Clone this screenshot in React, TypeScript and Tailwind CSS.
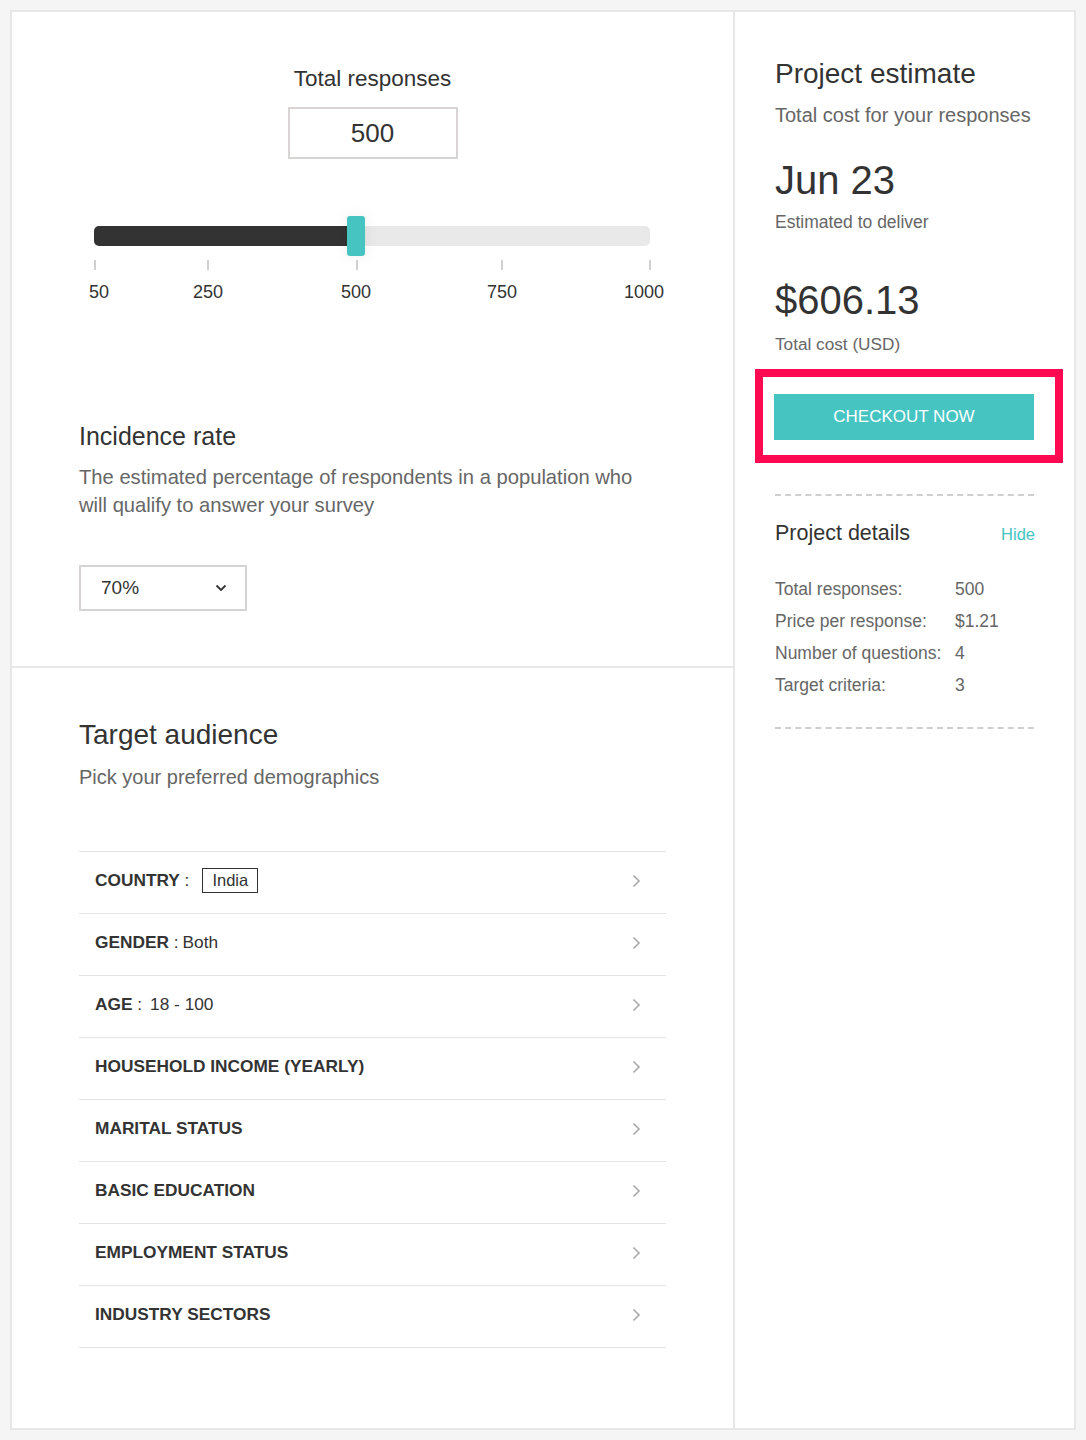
import React from 'react'

const ticks = [
  { tick: 0, label: 5, text: '50' },
  { tick: 113, label: 114, text: '250' },
  { tick: 262, label: 262, text: '500' },
  { tick: 407, label: 408, text: '750' },
  { tick: 555, label: 550, text: '1000' },
]

const criteria: { label: string; value?: React.ReactNode }[] = [
  {
    label: 'COUNTRY',
    value: (
      <span className="ml-[13px] inline-block border-[1.5px] border-[#333] px-[9px] text-[16.5px] leading-[23px] font-normal">India</span>
    ),
  },
  { label: 'GENDER', value: <span className="ml-[4px] font-normal">Both</span> },
  { label: 'AGE', value: <span className="ml-[8px] font-normal">18 - 100</span> },
  { label: 'HOUSEHOLD INCOME (YEARLY)' },
  { label: 'MARITAL STATUS' },
  { label: 'BASIC EDUCATION' },
  { label: 'EMPLOYMENT STATUS' },
  { label: 'INDUSTRY SECTORS' },
]

const details = [
  ['Total responses:', '500'],
  ['Price per response:', '$1.21'],
  ['Number of questions:', '4'],
  ['Target criteria:', '3'],
]

const Chevron = () => (
  <svg width="9" height="14" viewBox="0 0 9 14" fill="none" className="text-[#aaa]">
    <polyline points="1.5,1.5 7,7 1.5,12.5" stroke="currentColor" strokeWidth="1.6" />
  </svg>
)

const Slider = () => (
  <div className="relative ml-[82px] mt-[57px] h-[86px] w-[556px]">
    <div className="absolute left-0 top-[10px] h-[20px] w-[556px] overflow-hidden rounded-[5px] bg-[#e9e9e9]">
      <div className="h-full w-[262px] bg-[#333]" />
    </div>
    <div className="absolute left-[253px] top-0 h-[40px] w-[18px] rounded-[3px] bg-[#45c4c2] shadow-[0_0_14px_rgba(0,0,0,0.08)]" />
    {ticks.map(t => (
      <React.Fragment key={t.text}>
        <div className="absolute top-[44px] h-[10px] w-[2px] bg-[#d0d0d0]" style={{ left: t.tick }} />
        <div
          className="absolute top-[65px] -translate-x-1/2 text-[18px] leading-[22px] text-[#333]"
          style={{ left: t.label }}
        >
          {t.text}
        </div>
      </React.Fragment>
    ))}
  </div>
)

export default function App() {
  return (
    <div
      className="min-h-[1440px] bg-[#f5f5f5] pl-[10px] pt-[10px]"
      style={{ fontFamily: '"Liberation Sans", Arial, sans-serif' }}
    >
      <div className="flex h-[1420px] w-[1066px] border-2 border-[#e7e7e7] bg-white text-[#333]">
        {/* left column */}
        <div className="flex w-[723px] flex-col border-r-2 border-[#e7e7e7]">
          <section className="h-[656px] border-b-2 border-[#e7e7e7] pt-[54px]">
            <h2 className="text-center text-[22.5px] leading-[26px]">Total responses</h2>
            <div className="mx-auto mt-[15px] flex h-[52px] w-[170px] items-center justify-center border-2 border-[#d8d4d4] text-[26px]">
              500
            </div>
            <Slider />
            <div className="pl-[67px]">
              <h3 className="mt-[119px] text-[25px] leading-[30px]">Incidence rate</h3>
              <p className="mt-[12px] w-[580px] text-[20.2px] leading-[28px] text-[#666]">
                The estimated percentage of respondents in a population who will qualify to answer your survey
              </p>
              <div className="mt-[46px] flex h-[46px] w-[168px] items-center justify-between border-2 border-[#d8d4d4] pl-[20px] pr-[18px] text-[19px]">
                <span>70%</span>
                <svg width="12" height="8" viewBox="0 0 12 8" fill="none">
                  <polyline points="1.5,1.5 6,6 10.5,1.5" stroke="#333" strokeWidth="1.8" />
                </svg>
              </div>
            </div>
          </section>

          <section className="pl-[67px] pt-[50px]">
            <h2 className="text-[28px] leading-[34px]">Target audience</h2>
            <p className="mt-[11px] text-[20px] leading-[28px] text-[#666]">Pick your preferred demographics</p>
            <ul className="mt-[60px] w-[587px] border-t border-[#e3e3e3]">
              {criteria.map(c => (
                <li
                  key={c.label}
                  className="flex h-[62px] items-center justify-between border-b border-[#e3e3e3] pb-[4px] pl-[16px] pr-[25px] text-[17.3px]"
                >
                  <span className="flex items-center font-bold">
                    {c.label}
                    {c.value && <span className="font-normal">&nbsp;:</span>}
                    {c.value}
                  </span>
                  <Chevron />
                </li>
              ))}
            </ul>
          </section>
        </div>

        {/* right column */}
        <div className="flex-1 pl-[40px] pt-[45px]">
          <h2 className="text-[28px] leading-[34px]">Project estimate</h2>
          <p className="mt-[12px] text-[20px] leading-[24px] text-[#666]">Total cost for your responses</p>
          <p className="mt-[30px] text-[40px] leading-[46px]">Jun 23</p>
          <p className="mt-[8px] text-[17.5px] leading-[22px] text-[#666]">Estimated to deliver</p>
          <p className="mt-[44px] text-[40px] leading-[46px]">$606.13</p>
          <p className="mt-[10px] text-[17.2px] leading-[22px] text-[#666]">Total cost (USD)</p>

          <div className="-ml-[20px] mt-[14px] w-[308px] border-8 border-[#ff0a52] pb-[15px] pl-[11px] pr-[21px] pt-[17px]">
            <button className="flex h-[46px] w-[260px] items-center justify-center bg-[#45c4c2] text-[17px] text-white">
              CHECKOUT NOW
            </button>
          </div>

          <div className="mt-[31px] w-[259px] border-t-2 border-dashed border-[#cfcfcf]" />

          <div className="mt-[24px] flex w-[260px] items-baseline justify-between">
            <h3 className="text-[21.5px] leading-[26px]">Project details</h3>
            <span className="text-[16.5px] text-[#45c4c2]">Hide</span>
          </div>

          <div className="mt-[26px] text-[17.5px] leading-[32px] text-[#666]">
            {details.map(([k, v]) => (
              <div key={k} className="flex">
                <span className="w-[180px]">{k}</span>
                <span>{v}</span>
              </div>
            ))}
          </div>

          <div className="mt-[26px] w-[259px] border-t-2 border-dashed border-[#cfcfcf]" />
        </div>
      </div>
    </div>
  )
}
